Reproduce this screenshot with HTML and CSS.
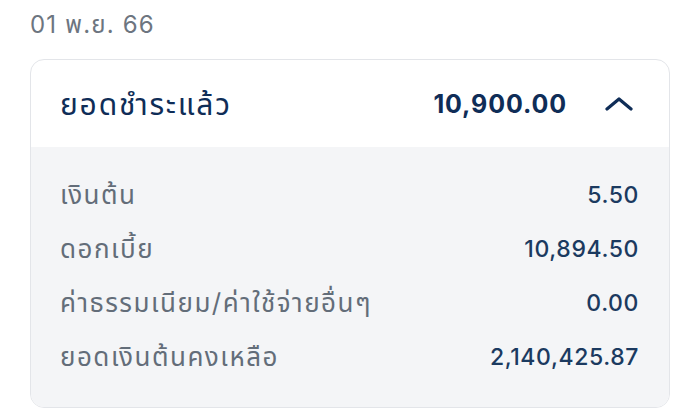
FILE: index.html
```html
<!DOCTYPE html>
<html lang="th">
<head>
<meta charset="utf-8">
<link rel="stylesheet" href="styles.css">
</head>
<body>
<div class="page">
  <div class="date">01 พ.ย. 66</div>
  <div class="card">
    <div class="card-head">
      <div class="title">ยอดชำระแล้ว</div>
      <div class="head-right">
        <div class="amount">10,900.00</div>
        <svg class="chev" width="28" height="14" viewBox="0 0 28 14"><path d="M2 12 L14 2 L26 12" fill="none" stroke="#0f2d57" stroke-width="3.2" stroke-linecap="round" stroke-linejoin="round"/></svg>
      </div>
    </div>
    <div class="card-body">
      <div class="row"><span class="label">เงินต้น</span><span class="value">5.50</span></div>
      <div class="row"><span class="label">ดอกเบี้ย</span><span class="value">10,894.50</span></div>
      <div class="row"><span class="label">ค่าธรรมเนียม/ค่าใช้จ่ายอื่นๆ</span><span class="value">0.00</span></div>
      <div class="row"><span class="label">ยอดเงินต้นคงเหลือ</span><span class="value">2,140,425.87</span></div>
    </div>
  </div>
</div>
</body>
</html>
```

FILE: styles.css
```css
* { box-sizing: border-box; }
html, body { margin: 0; padding: 0; background: #ffffff; }
body { font-family: "Inter", "Noto Sans Thai", "Noto Sans", sans-serif; }
.page { padding: 6px 30px 0 30px; }
.date {
  font-size: 24px;
  line-height: 38px;
  color: #6d7580;
  letter-spacing: 1.2px;
}
.card {
  margin-top: 15px;
  border: 1px solid #e3e5e9;
  border-radius: 14px;
  overflow: hidden;
  background: #ffffff;
}
.card-head {
  height: 87px;
  display: flex;
  align-items: center;
  justify-content: space-between;
  padding: 0 36px 0 29px;
}
.title {
  font-size: 30px;
  line-height: 40px;
  letter-spacing: 1.8px;
  color: #0f2d57;
}
.head-right {
  display: flex;
  align-items: center;
  gap: 38px;
}
.amount {
  font-size: 25px;
  font-weight: 700;
  letter-spacing: 0.9px;
  color: #0f2d57;
}
.chev { display: block; }
.card-body {
  background: #f4f5f7;
  padding: 21px 30px 23px 29px;
}
.row {
  height: 54px;
  display: flex;
  align-items: center;
  justify-content: space-between;
}
.label {
  font-size: 26px;
  line-height: 36px;
  letter-spacing: 1.5px;
  color: #636d79;
}
.value {
  font-size: 23px;
  font-weight: 500;
  letter-spacing: 0.6px;
  color: #1b3a60;
}
```
